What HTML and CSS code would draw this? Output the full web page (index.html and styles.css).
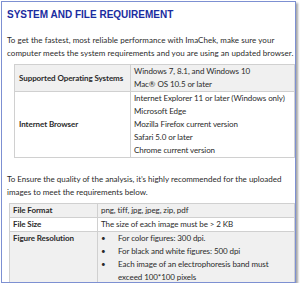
FILE: index.html
```html
<!DOCTYPE html>
<html>
<head>
<meta charset="utf-8">
<link rel="stylesheet" href="styles.css">
</head>
<body>
<div class="frame">
  <h1 class="title">SYSTEM AND FILE REQUIREMENT</h1>
  <p class="intro">To get the fastest, most reliable performance with ImaChek, make sure your computer meets the system requirements and you are using an updated browser.</p>
  <table class="req req-sys">
    <tr class="shaded">
      <th>Supported Operating Systems</th>
      <td><div>Windows 7, 8.1, and Windows 10</div><div>Mac® OS 10.5 or later</div></td>
    </tr>
    <tr>
      <th>Internet Browser</th>
      <td>
        <div>Internet Explorer 11 or later (Windows only)</div>
        <div>Microsoft Edge</div>
        <div>Mozilla Firefox current version</div>
        <div>Safari 5.0 or later</div>
        <div>Chrome current version</div>
      </td>
    </tr>
  </table>
  <p class="intro second">To Ensure the quality of the analysis, it’s highly recommended for the uploaded images to meet the requirements below.</p>
  <table class="req req-file">
    <tr class="shaded">
      <th>File Format</th>
      <td>png, tiff, jpg, jpeg, zip, pdf</td>
    </tr>
    <tr>
      <th>File Size</th>
      <td>The size of each image must be &gt; 2 KB</td>
    </tr>
    <tr class="shaded">
      <th>Figure Resolution</th>
      <td>
        <ul class="bullets">
          <li>For color figures: 300 dpi.</li>
          <li>For black and white figures: 500 dpi</li>
          <li>Each image of an electrophoresis band must exceed 100*100 pixels</li>
        </ul>
      </td>
    </tr>
  </table>
</div>
</body>
</html>
```
FILE: styles.css
```css
html, body {
  margin: 0;
  padding: 0;
  background: #ffffff;
}
.frame {
  box-sizing: border-box;
  margin: 1px 0 0 1px;
  width: 295px;
  height: 282px;
  border: 1px solid #7d90d2;
  box-shadow: 2px 2px 2px rgba(0, 0, 0, 0.35);
  overflow: hidden;
  font-family: Lato, "Open Sans", sans-serif;
  font-size: 8px;
  color: #2a2a2a;
}
.title {
  margin: 7px 0 0 5px;
  font-family: "Liberation Sans", Arial, sans-serif;
  font-size: 10px;
  font-weight: bold;
  line-height: 11px;
  color: #1a2ca0;
}
.intro {
  margin: 14px 0 0 5px;
  line-height: 13px;
  width: 289px;
  letter-spacing: 0.05px;
}
.intro.second {
  margin-top: 15px;
  line-height: 12.5px;
  letter-spacing: 0;
}
.req {
  border-collapse: collapse;
  line-height: 13px;
  letter-spacing: -0.08px;
}
.req th, .req td {
  border: 1px solid #d0d0d0;
  text-align: left;
  vertical-align: top;
  padding: 0 2px 0 3px;
}
.req th {
  font-weight: bold;
}
.req-sys {
  margin: 4px 0 0 12px;
  width: 281px;
}
.req-sys th {
  width: 109px;
  vertical-align: middle;
  padding-left: 4px;
}
.shaded th, .shaded td {
  background: #f0f0f0;
}
.req-file {
  margin: 5px 0 0 7px;
  width: 286px;
}
.req-file th {
  width: 82px;
}
.bullets {
  list-style: none;
  margin: 0;
  padding: 0;
}
.bullets li {
  position: relative;
  padding-left: 17px;
  line-height: 13px;
}
.bullets li::before {
  content: "•";
  position: absolute;
  left: 0;
  top: 0;
}
```
